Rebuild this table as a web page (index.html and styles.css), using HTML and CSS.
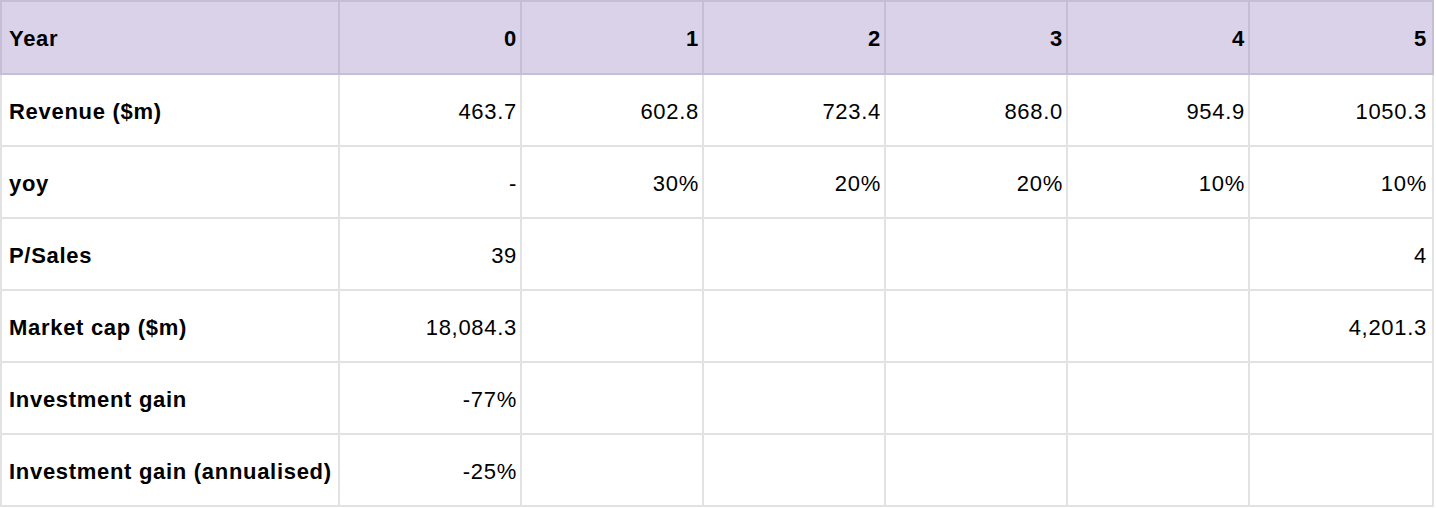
FILE: index.html
```html
<!DOCTYPE html>
<html>
<head>
<meta charset="utf-8">
<link rel="stylesheet" href="styles.css">
</head>
<body>
<table class="sheet">
  <colgroup>
    <col class="c-label"><col class="c-num"><col class="c-num"><col class="c-num"><col class="c-num"><col class="c-num"><col class="c-last">
  </colgroup>
  <thead>
    <tr class="head">
      <th class="label">Year</th><th>0</th><th>1</th><th>2</th><th>3</th><th>4</th><th class="last">5</th>
    </tr>
  </thead>
  <tbody>
    <tr><td class="label">Revenue ($m)</td><td>463.7</td><td>602.8</td><td>723.4</td><td>868.0</td><td>954.9</td><td class="last">1050.3</td></tr>
    <tr><td class="label">yoy</td><td>-</td><td>30%</td><td>20%</td><td>20%</td><td>10%</td><td class="last">10%</td></tr>
    <tr><td class="label">P/Sales</td><td>39</td><td></td><td></td><td></td><td></td><td class="last">4</td></tr>
    <tr><td class="label">Market cap ($m)</td><td>18,084.3</td><td></td><td></td><td></td><td></td><td class="last">4,201.3</td></tr>
    <tr><td class="label">Investment gain</td><td>-77%</td><td></td><td></td><td></td><td></td><td class="last"></td></tr>
    <tr><td class="label">Investment gain (annualised)</td><td>-25%</td><td></td><td></td><td></td><td></td><td class="last"></td></tr>
  </tbody>
</table>
</body>
</html>
```

FILE: styles.css
```css
html, body {
  margin: 0;
  padding: 0;
  background: #ffffff;
}
body {
  font-family: "Liberation Sans", Arial, sans-serif;
  color: #000000;
}
.sheet {
  border-collapse: collapse;
  table-layout: fixed;
  width: 1432px;
  margin: 0;
}
.c-label { width: 338px; }
.c-num { width: 182px; }
.c-last { width: 184px; }
.sheet th,
.sheet td {
  padding: 3px 3px 0 7px;
  border: 2px solid #e2e2e2;
  font-size: 22px;
  letter-spacing: 0.7px;
  text-align: right;
  vertical-align: middle;
  white-space: nowrap;
  box-sizing: border-box;
  height: 72px;
}
.sheet .head th {
  background: #d9d2e9;
  border-color: #c5bfd5;
  font-weight: bold;
  height: 73px;
}
.sheet .label {
  text-align: left;
  font-weight: bold;
}
.sheet .last {
  padding-right: 5px;
}
```
